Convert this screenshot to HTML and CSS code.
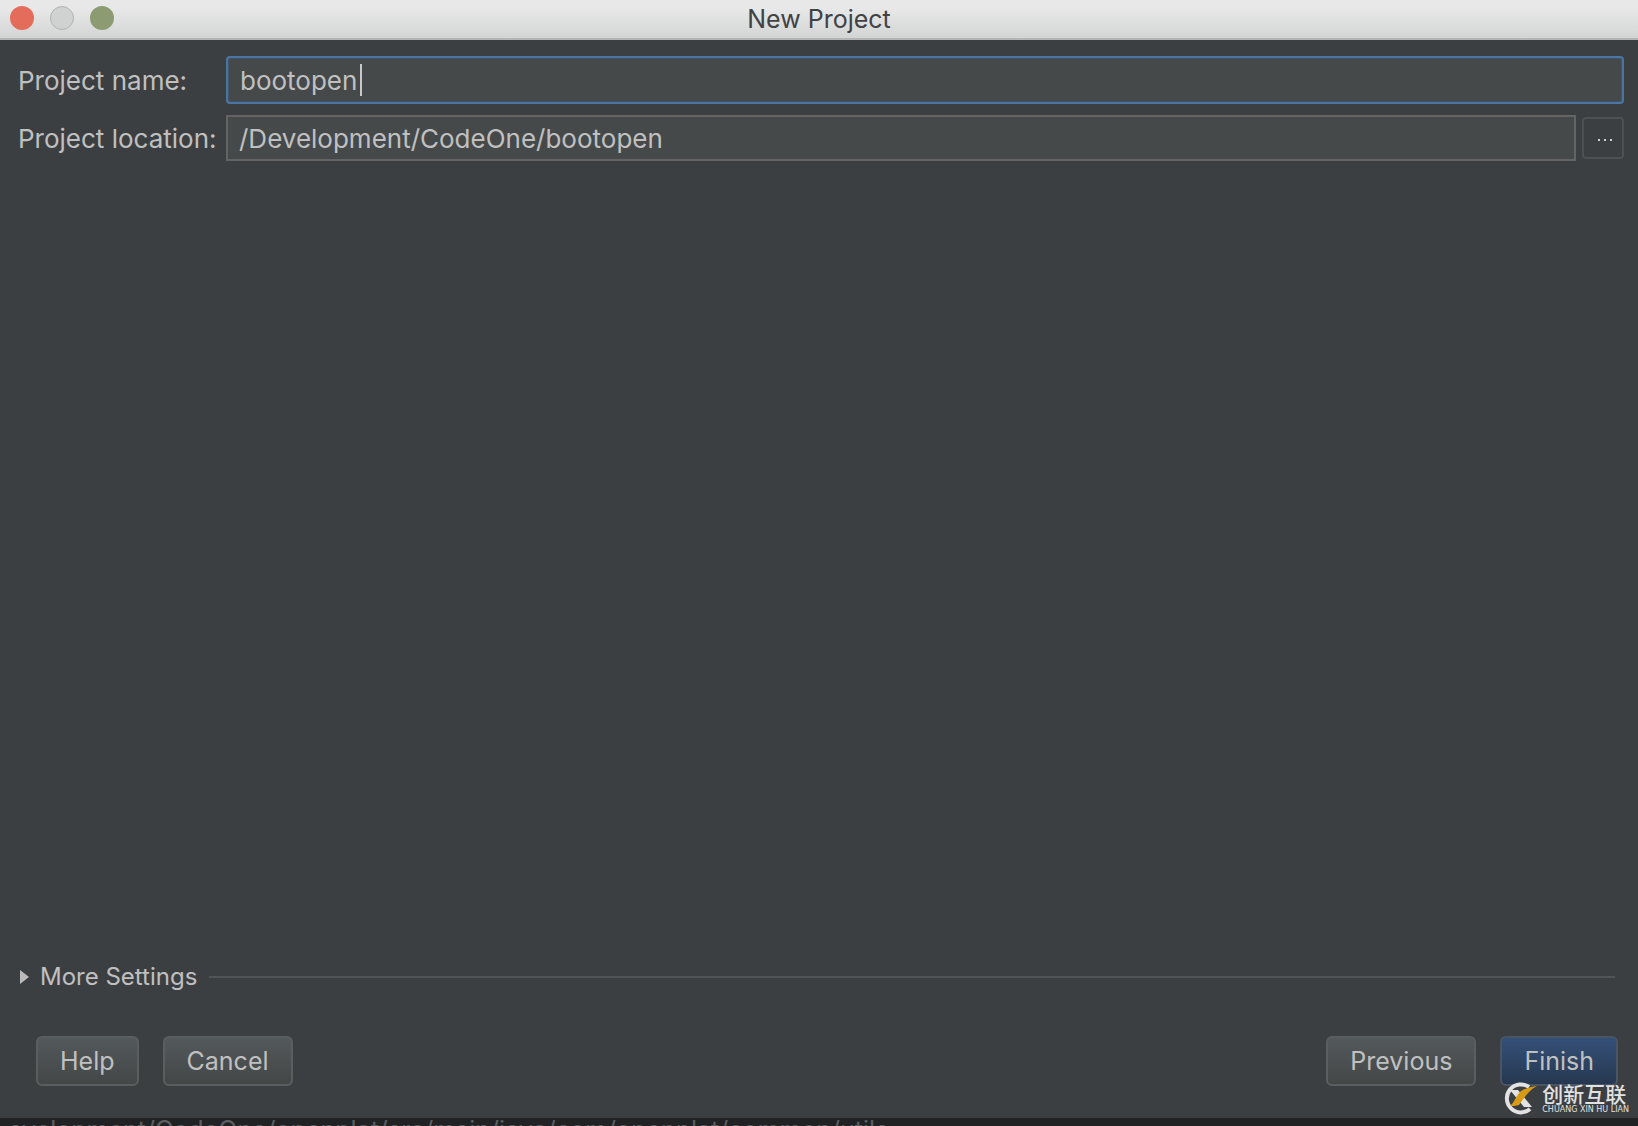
FILE: index.html
```html
<!DOCTYPE html>
<html lang="en">
<head>
    <meta charset="UTF-8">
    <meta name="viewport" content="width=device-width, initial-scale=1.0">
    <title>New Project</title>
    <link rel="stylesheet" href="styles.css">
</head>
<body>
    <header class="titlebar">
        <div class="window-controls">
            <button type="button" class="dot dot-close" aria-label="Close"></button>
            <button type="button" class="dot dot-minimize" aria-label="Minimize"></button>
            <button type="button" class="dot dot-zoom" aria-label="Zoom"></button>
        </div>
        <h1>New Project</h1>
    </header>

    <form class="dialog">
        <div class="fields">
            <label for="projectName">Project name:</label>
            <div class="field-focused">
                <input type="text" id="projectName" value="bootopen">
                <span class="caret"></span>
            </div>
            <label for="projectLocation">Project location:</label>
            <div class="location">
                <input type="text" id="projectLocation" value="/Development/CodeOne/bootopen">
                <button type="button" class="browse" aria-label="Browse">
                    <svg width="14" height="2" viewBox="0 0 14 2" fill="#d0d0d0">
                        <rect width="2" height="2"/>
                        <rect x="6" width="2" height="2"/>
                        <rect x="12" width="2" height="2"/>
                    </svg>
                </button>
            </div>
        </div>

        <div class="more">
            <button type="button" class="more-toggle">
                <svg width="9" height="14" viewBox="0 0 9 14" fill="#bbbbbb"><path d="M0 0L9 7L0 14Z"/></svg>
                More Settings
            </button>
            <hr>
        </div>

        <div class="actions">
            <button type="button" class="btn">Help</button>
            <button type="button" class="btn">Cancel</button>
            <span class="spacer"></span>
            <button type="button" class="btn">Previous</button>
            <button type="submit" class="btn btn-primary">Finish</button>
        </div>
    </form>

    <footer class="path">evelopment/CodeOne/openplat/src/main/java/com/openplat/common/utils</footer>

    <div class="watermark">
        <svg width="36" height="34" viewBox="0 0 36 34">
            <path d="M28 6A14 14 0 1 0 29 28" fill="none" stroke="#e2e2e2" stroke-width="4"/>
            <path d="M9 9H17L31 26H23Z" fill="#e2e2e2"/>
            <path d="M9 25C14 21 15 14 20 10C25 7 30 6 36 5C28 9 23 17 18 24C15 25 12 25 9 25Z" fill="#d69a16"/>
        </svg>
        <div>
            <div class="watermark-name" lang="zh">创新互联</div>
            <div class="watermark-latin">CHUANG XIN HU LIAN</div>
        </div>
    </div>
</body>
</html>
```
FILE: styles.css
```css
* {
    box-sizing: border-box;
}
body {
    margin: 0;
    height: 100vh;
    display: flex;
    flex-direction: column;
    position: relative;
    overflow: hidden;
    background: #3c3f41;
    color: #c0c0c0;
    font-family: Inter, "Liberation Sans", sans-serif;
    font-size: 26px;
    line-height: 32px;
}
button, input {
    font: inherit;
    color: inherit;
    margin: 0;
}
.titlebar {
    flex: none;
    display: grid;
    grid-template-columns: 1fr auto 1fr;
    align-items: center;
    height: 40px;
    padding: 0 10px 2px;
    background: linear-gradient(#e8e8e8 20%, #d3d5d4);
    border-bottom: 2px solid #b4b6b5;
}
.titlebar h1 {
    margin: 0;
    padding-top: 2px;
    color: #404244;
    font-size: 25px;
    font-weight: 400;
}
.window-controls {
    display: flex;
    gap: 16px;
}
.dot {
    width: 24px;
    height: 24px;
    padding: 0;
    border: none;
    border-radius: 50%;
}
.dot-close {
    background: #e36c5b;
}
.dot-minimize {
    background: #d0d2d1;
    border: 1px solid #b1b3b2;
}
.dot-zoom {
    background: #8c9b72;
}
.dialog {
    flex: 1;
    display: flex;
    flex-direction: column;
    padding: 16px 14px 32px 18px;
}
.fields {
    display: grid;
    grid-template-columns: 200px 1fr;
    column-gap: 8px;
    row-gap: 11px;
    align-items: center;
}
.fields label {
    padding-top: 2px;
    white-space: nowrap;
}
.fields input {
    display: block;
    width: 100%;
    height: 46px;
    padding: 1px 11px 0;
    background: #45494a;
    border: 2px solid #646464;
    outline: none;
}
.field-focused {
    position: relative;
}
.field-focused input {
    height: 48px;
    padding: 1px 12px 0;
    border: 2px solid #4a75a3;
    border-radius: 4px;
    box-shadow: inset 0 0 0 1px #40546b;
}
.caret {
    position: absolute;
    left: 134px;
    top: 8px;
    width: 2px;
    height: 32px;
    background: #c8c8c8;
}
.location {
    display: flex;
    align-items: center;
    gap: 6px;
}
.browse {
    flex: none;
    display: flex;
    align-items: center;
    justify-content: center;
    width: 42px;
    height: 42px;
    padding: 4px 0 0 4px;
    background: #3c3f41;
    border: 2px solid #4d5152;
    border-radius: 4px;
}
.more {
    display: flex;
    align-items: center;
    gap: 12px;
    margin-top: auto;
    padding-right: 9px;
}
.more-toggle {
    display: flex;
    align-items: center;
    gap: 11px;
    padding: 0 0 0 2px;
    background: none;
    border: none;
    font-size: 24px;
}
.more hr {
    flex: 1;
    height: 2px;
    margin: 0;
    background: #515557;
    border: none;
}
.actions {
    display: flex;
    gap: 24px;
    margin-top: 43px;
    padding: 0 6px 0 18px;
}
.spacer {
    flex: 1;
}
.btn {
    height: 50px;
    padding: 0 22px;
    background: linear-gradient(#53585a, #434748);
    border: 2px solid #5a5e5f;
    border-radius: 6px;
    font-size: 25px;
}
.btn-primary {
    background: linear-gradient(#345078, #263850);
    border-color: #4a5564;
}
.path {
    flex: none;
    height: 8px;
    padding-left: 8px;
    overflow: hidden;
    background: #212224;
    color: #5c5e60;
    font-size: 25px;
    line-height: 24px;
    white-space: nowrap;
}
.watermark {
    position: absolute;
    right: 9px;
    bottom: 11px;
    display: flex;
    gap: 5px;
    color: #e2e2e2;
}
.watermark-name {
    font: 500 21px/24px "Noto Sans CJK SC", sans-serif;
}
.watermark-latin {
    font: 8px/10px "DejaVu Sans", sans-serif;
    white-space: nowrap;
}
```
